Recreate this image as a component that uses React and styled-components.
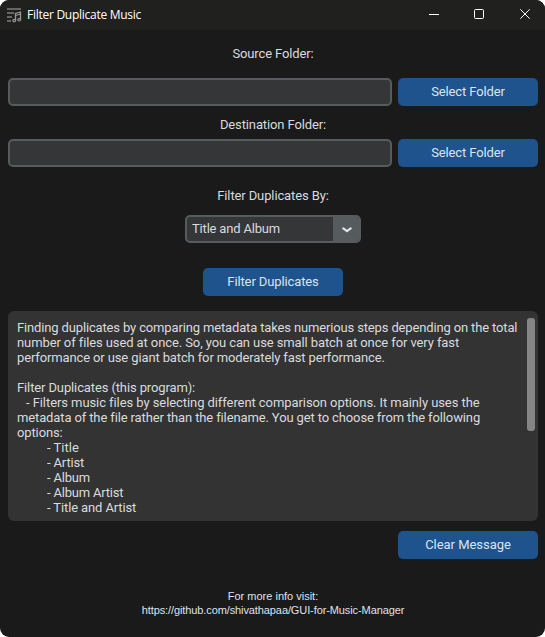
import React from "react";
import styled, { createGlobalStyle } from "styled-components";

const GlobalStyle = createGlobalStyle`
  body { margin: 0; background: #fff; }
  *, *::before, *::after { box-sizing: border-box; }
`;

const Window = styled.div`
  width: 545px;
  height: 637px;
  display: flex;
  flex-direction: column;
  overflow: hidden;
  border-radius: 9px;
  background: #1a1a1a;
  color: #d9dbde;
  font-family: Roboto, sans-serif;
  font-size: 13px;
`;

const TitleBar = styled.header`
  height: 30px;
  flex: none;
  display: flex;
  align-items: center;
  padding-left: 7px;
  background: #20201f;
  color: #fff;
`;

const Title = styled.h1`
  margin: 0 auto 0 5px;
  font: 400 12px/16px "Open Sans", sans-serif;
  letter-spacing: -0.27px;
  white-space: nowrap;
`;

const WindowControls = styled.div`
  display: flex;
  margin-right: -2px;
`;

const WindowButton = styled.button`
  width: 45px;
  height: 30px;
  padding: 0 0 2px 17px;
  display: flex;
  align-items: center;
  border: 0;
  background: none;
  color: inherit;
`;

const Content = styled.main`
  flex: 1;
  display: flex;
  flex-direction: column;
  align-items: center;
  padding: 14px 7px 0 8px;
`;

const Label = styled.div`
  height: 20px;
  line-height: 20px;
  margin-top: ${(p) => p.$top || 0}px;
  letter-spacing: -0.12px;
  white-space: nowrap;
`;

const FolderRow = styled.div`
  width: 100%;
  display: flex;
  gap: 6px;
  margin-top: ${(p) => p.$top}px;
`;

const PathInput = styled.input`
  flex: 1;
  min-width: 0;
  height: 28px;
  border: 2px solid #565b5e;
  border-radius: 5px;
  background: #343638;
  color: inherit;
  font: inherit;
  padding: 0 6px;
  outline: 0;
`;

const Button = styled.button`
  width: 140px;
  height: 28px;
  flex: none;
  margin-top: ${(p) => p.$top || 0}px;
  align-self: ${(p) => p.$align || "auto"};
  padding: 0 0 1px;
  border: 0;
  border-radius: 5px;
  background: #1f538d;
  color: #dce4ee;
  font: inherit;
  letter-spacing: ${(p) => p.$spacing ?? -0.12}px;
`;

const ComboBox = styled.div`
  width: 176px;
  height: 28px;
  flex: none;
  margin-top: 9px;
  display: flex;
  border: 2px solid #565b5e;
  border-radius: 5px;
  background: #343638;
  overflow: hidden;
`;

const ComboValue = styled.span`
  flex: 1;
  padding-left: 5px;
  line-height: 23px;
  letter-spacing: -0.18px;
`;

const ComboArrow = styled.span`
  width: 26px;
  padding: 1px 0 0 2px;
  display: grid;
  place-items: center;
  background: #565b5e;
`;

const MessageBox = styled.section`
  width: 100%;
  height: 210px;
  flex: none;
  display: flex;
  margin-top: 15px;
  padding: 7px 3px 0 9px;
  border-radius: 6px;
  background: #333;
`;

const Message = styled.div`
  flex: 1;
  min-width: 0;
  padding-top: 2px;
`;

const MessageLine = styled.div`
  height: 15px;
  line-height: 15px;
  padding-left: ${(p) => p.$indent || 0}px;
  letter-spacing: ${(p) => p.$spacing}px;
  white-space: nowrap;
`;

const ScrollThumb = styled.div`
  flex: none;
  width: 8px;
  height: 113px;
  border-radius: 3px;
  background: #858585;
`;

const Footer = styled.footer`
  margin-top: 30px;
  text-align: center;
  font: 11px/14px "Liberation Sans", Arial, sans-serif;
  color: #dce4ee;
  white-space: nowrap;
`;

const FooterLink = styled.div`
  letter-spacing: -0.1px;
`;

const lines = [
  { text: "Finding duplicates by comparing metadata takes numerious steps depending on the total", spacing: -0.147 },
  { text: "number of files used at once. So, you can use small batch at once for very fast", spacing: -0.1 },
  { text: "performance or use giant batch for moderately fast performance.", spacing: -0.127 },
  { text: "", spacing: 0 },
  { text: "Filter Duplicates (this program):", spacing: -0.12 },
  { text: "- Filters music files by selecting different comparison options. It mainly uses the", spacing: -0.075, indent: 9 },
  { text: "metadata of the file rather than the filename. You get to choose from the following", spacing: -0.125 },
  { text: "options:", spacing: -0.12 },
  { text: "- Title", spacing: 0, indent: 30 },
  { text: "- Artist", spacing: -0.15, indent: 30 },
  { text: "- Album", spacing: -0.2, indent: 30 },
  { text: "- Album Artist", spacing: -0.2, indent: 30 },
  { text: "- Title and Artist", spacing: -0.12, indent: 30 },
];

const AppIcon = () => (
  <svg width="15" height="15" viewBox="0 0 15 15" fill="none" stroke="#969696">
    <path d="M0 1h14" stroke="#666" strokeWidth="2" />
    <path d="M0 5h7M0 9h5M0 13h4" stroke="#666" strokeWidth="1.8" />
    <path d="M8.5 12.5V5.5l5-1.5v8M8.5 7.5l5-1.5" strokeWidth="1.3" />
    <ellipse cx="7.2" cy="12.6" rx="1.4" ry="1.2" strokeWidth="1.2" />
    <ellipse cx="12.2" cy="11.8" rx="1.4" ry="1.2" strokeWidth="1.2" />
  </svg>
);

export default function App() {
  return (
    <>
      <GlobalStyle />
      <Window>
        <TitleBar>
          <AppIcon />
          <Title>Filter Duplicate Music</Title>
          <WindowControls>
            <WindowButton aria-label="Minimize">
              <svg width="10" height="10" stroke="currentColor"><path d="M0 5.5h10" /></svg>
            </WindowButton>
            <WindowButton aria-label="Maximize">
              <svg width="10" height="10" fill="none" stroke="currentColor"><rect x=".5" y=".5" width="9" height="9" rx="1" /></svg>
            </WindowButton>
            <WindowButton aria-label="Close">
              <svg width="11" height="10" stroke="currentColor"><path d="M1.3.3l9.4 9.4M10.7.3L1.3 9.7" /></svg>
            </WindowButton>
          </WindowControls>
        </TitleBar>
        <Content>
          <Label>Source Folder:</Label>
          <FolderRow $top={14}>
            <PathInput aria-label="Source folder" />
            <Button>Select Folder</Button>
          </FolderRow>
          <Label $top={9}>Destination Folder:</Label>
          <FolderRow $top={4}>
            <PathInput aria-label="Destination folder" />
            <Button>Select Folder</Button>
          </FolderRow>
          <Label $top={19}>Filter Duplicates By:</Label>
          <ComboBox>
            <ComboValue>Title and Album</ComboValue>
            <ComboArrow>
              <svg width="10" height="6" fill="none" stroke="#dce4ee" strokeWidth="2.1" strokeLinecap="round" strokeLinejoin="round">
                <path d="M1.3 1.4L5 4.2l3.7-2.8" />
              </svg>
            </ComboArrow>
          </ComboBox>
          <Button $top={25}>Filter Duplicates</Button>
          <MessageBox>
            <Message>
              {lines.map((line, i) => (
                <MessageLine key={i} $indent={line.indent} $spacing={line.spacing}>
                  {line.text}
                </MessageLine>
              ))}
            </Message>
            <ScrollThumb />
          </MessageBox>
          <Button $top={10} $align="flex-end" $spacing={-0.04}>Clear Message</Button>
          <Footer>
            <div>For more info visit:</div>
            <FooterLink>https://github.com/shivathapaa/GUI-for-Music-Manager</FooterLink>
          </Footer>
        </Content>
      </Window>
    </>
  );
}
